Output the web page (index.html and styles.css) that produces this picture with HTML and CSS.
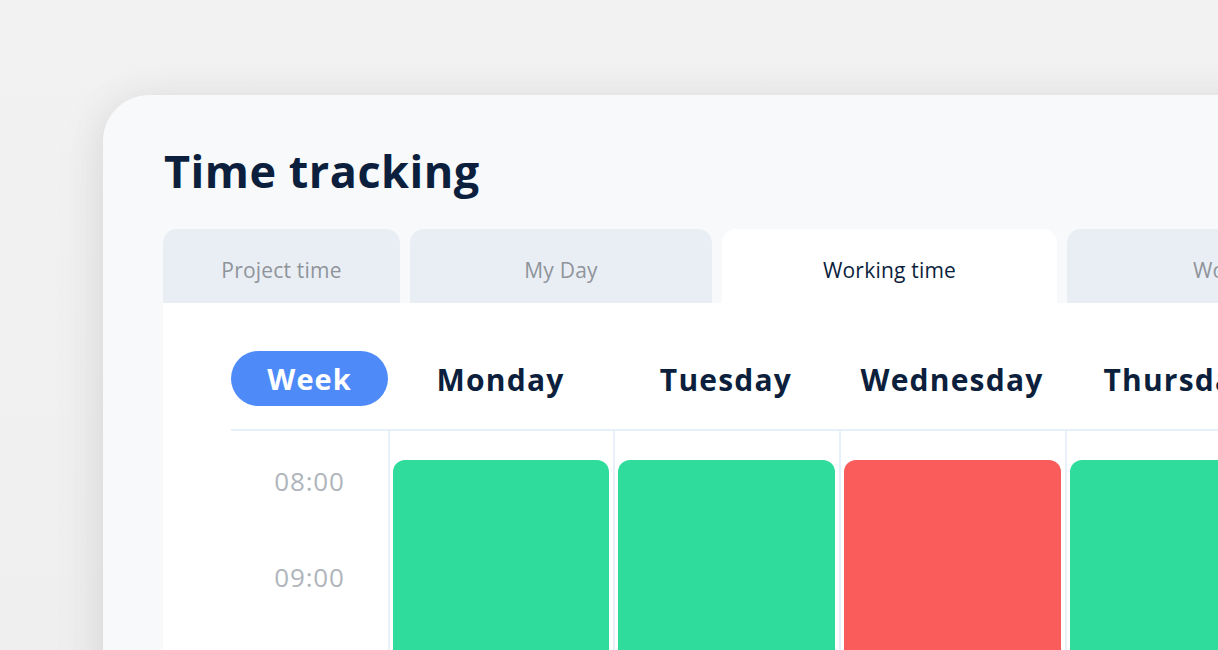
FILE: index.html
```html
<!DOCTYPE html>
<html>
<head>
<meta charset="utf-8">
<link rel="stylesheet" href="styles.css">
</head>
<body>
<div class="stage">
  <div class="card">
    <h1 class="title">Time tracking</h1>
    <div class="tabs">
      <div class="tab tab-project">Project time</div>
      <div class="tab tab-day">My Day</div>
      <div class="tab tab-working active">Working time</div>
      <div class="tab tab-work">Workload</div>
    </div>
    <div class="panel">
      <div class="grid">
        <div class="head first"><span class="pill">Week</span></div>
        <div class="head">Monday</div>
        <div class="head">Tuesday</div>
        <div class="head">Wednesday</div>
        <div class="head">Thursday</div>

        <div class="times">
          <div class="time">08:00</div>
          <div class="time">09:00</div>
        </div>
        <div class="col"><div class="block green"></div></div>
        <div class="col"><div class="block green"></div></div>
        <div class="col"><div class="block red"></div></div>
        <div class="col"><div class="block green"></div></div>
      </div>
    </div>
  </div>
</div>
</body>
</html>
```

FILE: styles.css
```css
* { box-sizing: border-box; }
html, body {
  margin: 0;
  padding: 0;
  width: 1218px;
  height: 650px;
  overflow: hidden;
  background: #f0f0f0;
  font-family: "Open Sans", "Liberation Sans", sans-serif;
}
.stage {
  width: 1218px;
  height: 650px;
  padding: 95px 0 0 103px;
  background: linear-gradient(180deg, #f2f2f2 0%, #efefef 100%);
  overflow: hidden;
}
.card {
  width: 1300px;
  height: 700px;
  background: #f7f9fa;
  border-radius: 46px 0 0 0;
  box-shadow: 0 0 40px rgba(0,0,0,0.06), -10px 10px 50px rgba(0,0,0,0.05);
  padding: 48px 0 0 60px;
}
.title {
  margin: 0 0 0 1px;
  font-size: 45px;
  line-height: 56px;
  font-weight: 700;
  color: #0c1f3d;
  letter-spacing: 0.5px;
}
.tabs {
  display: flex;
  gap: 10px;
  margin-top: 30px;
  height: 74px;
}
.tab {
  height: 74px;
  background: #e9eef4;
  border-radius: 14px 14px 0 0;
  color: #8f949b;
  font-size: 21px;
  letter-spacing: 0.2px;
  display: flex;
  align-items: center;
  justify-content: center;
  padding-top: 8px;
  flex: none;
  white-space: nowrap;
}
.tab-project { width: 237px; }
.tab-day { width: 302px; }
.tab-working { width: 335px; }
.tab-work { width: 300px; justify-content: flex-start; padding-left: 126px; }
.tab.active {
  background: #ffffff;
  color: #0c1f3d;
}
.panel {
  background: #ffffff;
  height: 400px;
  padding: 48px 0 0 68px;
}
.grid {
  display: grid;
  grid-template-columns: 157px 225px 226px 226px 226px;
  grid-template-rows: 80px 300px;
}
.head {
  border-bottom: 2px solid #e5f0fa;
  display: flex;
  justify-content: center;
  padding-top: 8px;
  font-size: 30px;
  font-weight: 700;
  color: #0c1f3d;
  letter-spacing: 1.2px;
  white-space: nowrap;
}
.head.first { padding-top: 0; }
.pill {
  width: 157px;
  height: 55px;
  border-radius: 28px;
  background: #4f8bf8;
  color: #ffffff;
  font-size: 29px;
  font-weight: 700;
  letter-spacing: 1px;
  display: flex;
  align-items: center;
  justify-content: center;
}
.times {
  display: flex;
  flex-direction: column;
  align-items: center;
  padding-top: 33px;
  gap: 61px;
}
.time {
  font-size: 26px;
  line-height: 35px;
  letter-spacing: 0.8px;
  color: #b0b5bc;
}
.col {
  border-left: 2px solid #e8f1fb;
  padding: 29px 4px 0 3px;
}
.block {
  height: 260px;
  border-radius: 12px;
}
.green { background: #30dc9c; }
.red { background: #fa5b5b; }
```
